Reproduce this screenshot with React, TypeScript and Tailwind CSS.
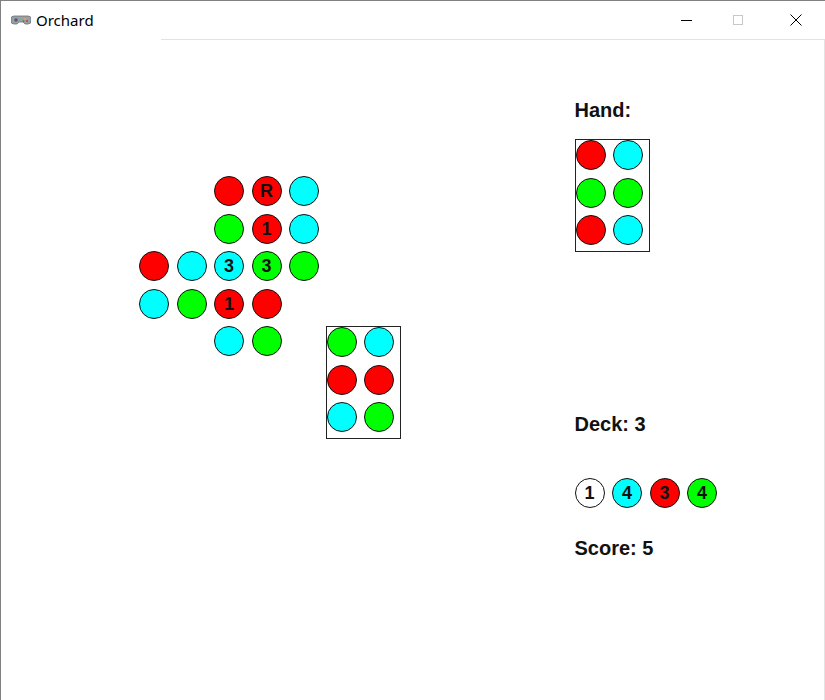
import React from 'react';

type Piece = { c: 'r' | 'g' | 'b' | 'w'; t?: string };

const COLORS: Record<Piece['c'], string> = {
  r: 'bg-[#ff0000]',
  g: 'bg-[#00ff00]',
  b: 'bg-[#00ffff]',
  w: 'bg-white',
};

// board cells: [row, col, piece]
const BOARD: [number, number, Piece][] = [
  [0, 2, { c: 'r' }],
  [0, 3, { c: 'r', t: 'R' }],
  [0, 4, { c: 'b' }],
  [1, 2, { c: 'g' }],
  [1, 3, { c: 'r', t: '1' }],
  [1, 4, { c: 'b' }],
  [2, 0, { c: 'r' }],
  [2, 1, { c: 'b' }],
  [2, 2, { c: 'b', t: '3' }],
  [2, 3, { c: 'g', t: '3' }],
  [2, 4, { c: 'g' }],
  [3, 0, { c: 'b' }],
  [3, 1, { c: 'g' }],
  [3, 2, { c: 'r', t: '1' }],
  [3, 3, { c: 'r' }],
  [4, 2, { c: 'b' }],
  [4, 3, { c: 'g' }],
];

const ROW_START = ['row-start-1', 'row-start-2', 'row-start-3', 'row-start-4', 'row-start-5'];
const COL_START = ['col-start-1', 'col-start-2', 'col-start-3', 'col-start-4', 'col-start-5'];

function Dot({ p }: { p: Piece }) {
  return (
    <div
      className={`w-[30px] h-[30px] rounded-full border border-[#111] flex items-center justify-center text-[18px] font-bold text-[#111] leading-none ${COLORS[p.c]}`}
    >
      {p.t}
    </div>
  );
}

function Card({ pieces }: { pieces: Piece['c'][] }) {
  return (
    <div className="w-[75px] h-[113px] border border-[#222] grid grid-cols-[37px_37px] grid-rows-[37.5px_37.5px_37.5px]">
      {pieces.map((c, i) => (
        <Dot key={i} p={{ c }} />
      ))}
    </div>
  );
}

function GamepadIcon() {
  return (
    <svg width="20" height="12" viewBox="0 0 20 12">
      <path d="M3 2 h14 a3 3 0 0 1 3 3 v2 a3 3 0 0 1 -3 3 h-3 l-2 -2 h-4 l-2 2 h-3 a3 3 0 0 1 -3 -3 v-2 a3 3 0 0 1 3 -3z" fill="#9aa0a8" stroke="#6b7078" strokeWidth="0.8" />
      <circle cx="5" cy="6" r="1.8" fill="#555b63" />
      <circle cx="14" cy="5" r="1" fill="#e0b020" />
      <circle cx="16" cy="7" r="1" fill="#d03030" />
      <circle cx="12.5" cy="7" r="1" fill="#30a040" />
    </svg>
  );
}

export default function App() {
  return (
    <div className="w-[825px] h-[700px] bg-white border-l border-t border-[#808080] flex flex-col overflow-hidden" style={{ fontFamily: '"Liberation Sans", Arial, sans-serif' }}>
      {/* title bar */}
      <div className="h-[38px] flex items-center shrink-0">
        <div className="w-[160px] h-full flex items-center pl-[10px] gap-[5px]">
          <GamepadIcon />
          <span className="text-[15px] text-[#000]" style={{ fontFamily: '"Noto Sans", "Open Sans", sans-serif' }}>Orchard</span>
        </div>
        <div className="flex-1 h-full flex justify-end">
          <button className="w-[46px] h-full flex items-center justify-center">
            <div className="w-[11px] h-px bg-black" />
          </button>
          <button className="w-[58px] h-full flex items-center justify-center">
            <div className="w-[10px] h-[10px] border border-[#c8c8c8]" />
          </button>
          <button className="w-[58px] h-full flex items-center justify-center">
            <svg width="12" height="12" viewBox="0 0 12 12">
              <path d="M0.5 0.5 L11.5 11.5 M11.5 0.5 L0.5 11.5" stroke="#000" strokeWidth="1" />
            </svg>
          </button>
        </div>
      </div>

      {/* client area */}
      <div className="flex-1 flex">
        <div className="w-[160px] shrink-0" />
        <div className="flex-1 border-t border-r border-[#e3e3e3] flex">
          {/* board */}
          <div className="ml-[-22px] mt-[136px] grid grid-cols-[repeat(7,37.5px)] grid-rows-[repeat(7,37.5px)] self-start">
            {BOARD.map(([r, c, p], i) => (
              <div key={i} className={`${ROW_START[r]} ${COL_START[c]}`}>
                <Dot p={p} />
              </div>
            ))}
            <div className="col-start-6 col-span-2 row-start-5 row-span-3 -ml-px">
              <Card pieces={['g', 'b', 'r', 'r', 'b', 'g']} />
            </div>
          </div>

          {/* side panel */}
          <div className="ml-[173px] flex flex-col text-[20px] font-bold text-[#111] leading-[23px]">
            <div className="mt-[59px]">Hand:</div>
            <div className="mt-[17px]">
              <Card pieces={['r', 'b', 'g', 'g', 'r', 'b']} />
            </div>
            <div className="mt-[161px]">Deck: 3</div>
            <div className="mt-[42px] flex gap-[7.5px]">
              <Dot p={{ c: 'w', t: '1' }} />
              <Dot p={{ c: 'b', t: '4' }} />
              <Dot p={{ c: 'r', t: '3' }} />
              <Dot p={{ c: 'g', t: '4' }} />
            </div>
            <div className="mt-[29px]">Score: 5</div>
          </div>
        </div>
      </div>
    </div>
  );
}
